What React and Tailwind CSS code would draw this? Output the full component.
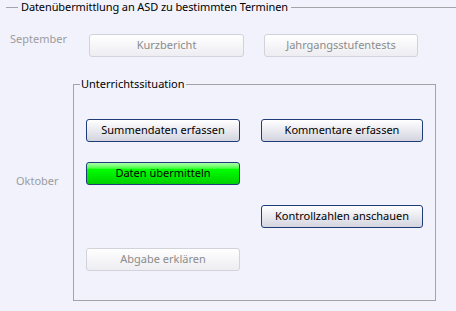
import React from 'react';

const btn =
  'h-[23px] rounded-[3px] border border-[#1e3d78] bg-linear-to-b from-white to-[#d4d4e0] text-[11px] text-black flex items-center justify-center';
const btnOff =
  'h-[23px] rounded-[3px] border border-[#d2d2da] bg-linear-to-b from-white to-[#ededf2] text-[11px] text-[#8c8c8c] flex items-center justify-center';
const btnGreen =
  'h-[23px] rounded-[3px] border border-[#1e3d78] bg-linear-to-b from-[#a8ffa8] via-[#00ff00] via-30% to-[#00d000] text-[11px] text-black flex items-center justify-center';

export default function App() {
  return (
    <div
      className="w-[456px] h-[311px] bg-[#f2f2fd] overflow-hidden text-black"
      style={{ fontFamily: '"Noto Sans", "Liberation Sans", sans-serif' }}
    >
      {/* Gruppenkopf */}
      <div className="flex items-center h-[14px]">
        <div className="ml-[6px] w-[12px] h-px bg-[#a3a3a8]" />
        <div className="px-[3px] text-[11px] leading-[14px] tracking-[-0.1px]">
          Datenübermittlung an ASD zu bestimmten Terminen
        </div>
        <div className="flex-1 h-px bg-[#a3a3a8]" />
      </div>

      {/* September */}
      <div className="flex items-start mt-[20px]">
        <div className="w-[89px] pl-[10px] -mt-[2px] text-[11px] leading-[14px] text-[#9c9c9c]">
          September
        </div>
        <div className={`${btnOff} w-[155px]`}>Kurzbericht</div>
        <div className={`${btnOff} w-[154px] ml-[20px]`}>Jahrgangsstufentests</div>
      </div>

      {/* Oktober */}
      <div className="flex items-start mt-[20px]">
        <div className="w-[73px] pl-[16px] mt-[97px] text-[11px] leading-[14px] text-[#9c9c9c]">
          Oktober
        </div>
        <fieldset className="w-[363px] h-[224px] border border-[#a3a3a8] m-0 p-0 min-w-0">
          <legend className="ml-[6px] px-[1px] text-[11px] leading-[14px]">
            Unterrichtssituation
          </legend>
          <div className="grid grid-cols-[154px_162px] grid-rows-[23px_23px_23px_23px] gap-x-[21px] gap-y-[20px] pl-[12px] pt-[28px]">
            <div className={btn}>Summendaten erfassen</div>
            <div className={btn}>Kommentare erfassen</div>
            <div className={btnGreen}>Daten übermitteln</div>
            <div />
            <div />
            <div className={btn}>Kontrollzahlen anschauen</div>
            <div className={btnOff}>Abgabe erklären</div>
            <div />
          </div>
        </fieldset>
      </div>
    </div>
  );
}
